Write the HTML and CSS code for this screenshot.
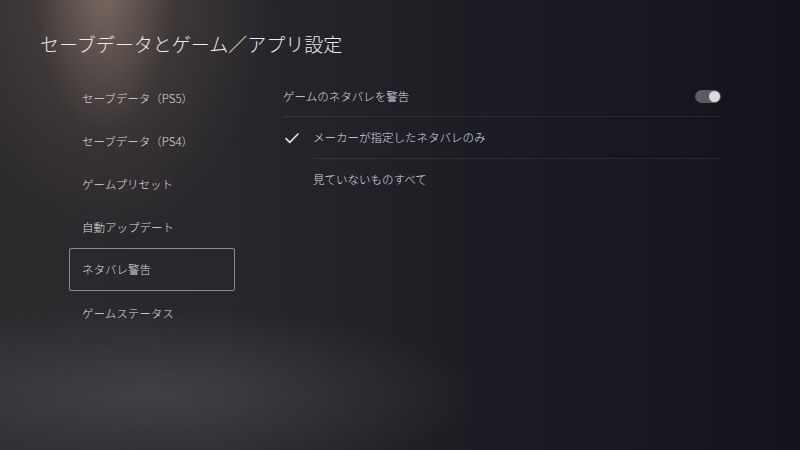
FILE: index.html
```html
<!DOCTYPE html>
<html lang="ja">
<head>
    <meta charset="UTF-8">
    <title>セーブデータとゲーム／アプリ設定</title>
    <link rel="stylesheet" href="styles.css">
</head>
<body>
    <div class="screen">
        <h1 class="title">セーブデータとゲーム／アプリ設定</h1>
        <div class="content">
            <ul class="nav">
                <li class="nav-item">セーブデータ（PS5）</li>
                <li class="nav-item">セーブデータ（PS4）</li>
                <li class="nav-item">ゲームプリセット</li>
                <li class="nav-item">自動アップデート</li>
                <li class="nav-item selected">ネタバレ警告</li>
                <li class="nav-item">ゲームステータス</li>
            </ul>
            <div class="panel">
                <div class="row row-main">
                    <span>ゲームのネタバレを警告</span>
                    <span class="toggle"><span class="knob"></span></span>
                </div>
                <div class="row option">
                    <span class="check">
                        <svg width="16" height="12" viewBox="0 0 16 12"><path d="M1.5 6.2 L5.8 10.3 L14.5 1.5" fill="none" stroke="#e6e6e6" stroke-width="1.6"/></svg>
                    </span>
                    <span class="option-label">メーカーが指定したネタバレのみ</span>
                </div>
                <div class="row option last">
                    <span class="check"></span>
                    <span class="option-label">見ていないものすべて</span>
                </div>
            </div>
        </div>
    </div>
</body>
</html>
```

FILE: styles.css
```css
html, body {
    margin: 0;
    padding: 0;
}
body {
    width: 800px;
    height: 450px;
    overflow: hidden;
    font-family: "Noto Sans CJK JP", "Noto Sans", sans-serif;
    font-weight: 300;
    color: #e4e4e6;
    background-color: #14151d;
    background-image:
        radial-gradient(ellipse 70px 150px at 105px -15px, rgba(175, 150, 135, 0.45), rgba(175, 150, 135, 0) 100%),
        radial-gradient(ellipse 170px 260px at 105px -20px, rgba(120, 100, 92, 0.45), rgba(120, 100, 92, 0) 100%),
        radial-gradient(ellipse 330px 90px at 150px 395px, rgba(85, 84, 90, 0.55), rgba(85, 84, 90, 0) 100%),
        linear-gradient(90deg, #2c2a2d 0%, #28272b 28%, #1c1d24 60%, #12131b 100%);
}
.screen {
    padding: 30px 0 0 40px;
}
.title {
    margin: 0;
    font-size: 19px;
    font-weight: 300;
    line-height: 28px;
    color: #ececee;
}
.content {
    display: flex;
    margin-top: 18px;
    margin-left: 29px;
}
.nav {
    list-style: none;
    margin: 0;
    padding: 0;
    width: 166px;
}
.nav-item {
    height: 43px;
    line-height: 43px;
    padding-left: 12px;
    font-size: 11.5px;
    color: #dcdcde;
    box-sizing: border-box;
    border: 1px solid transparent;
    border-radius: 2px;
}
.nav-item.selected {
    border-color: rgba(210, 205, 205, 0.6);
    line-height: 41px;
}
.panel {
    margin-left: 48px;
    width: 438px;
}
.row {
    height: 41px;
    display: flex;
    align-items: center;
    font-size: 11.5px;
    color: #dedee0;
    box-sizing: border-box;
}
.row-main {
    justify-content: space-between;
    border-bottom: 1px solid rgba(255, 255, 255, 0.07);
}
.option-label {
    flex: 1;
    height: 100%;
    display: flex;
    align-items: center;
    border-bottom: 1px solid rgba(255, 255, 255, 0.07);
}
.option.last .option-label {
    border-bottom: none;
}
.check {
    width: 29px;
    display: flex;
    align-items: center;
    padding-left: 1px;
}
.toggle {
    width: 26px;
    height: 13px;
    border-radius: 7px;
    background: #5c5c64;
    display: flex;
    align-items: center;
    justify-content: flex-end;
    padding: 0 1px;
    box-sizing: border-box;
}
.knob {
    width: 11px;
    height: 11px;
    border-radius: 50%;
    background: #dcdcdc;
}
```
